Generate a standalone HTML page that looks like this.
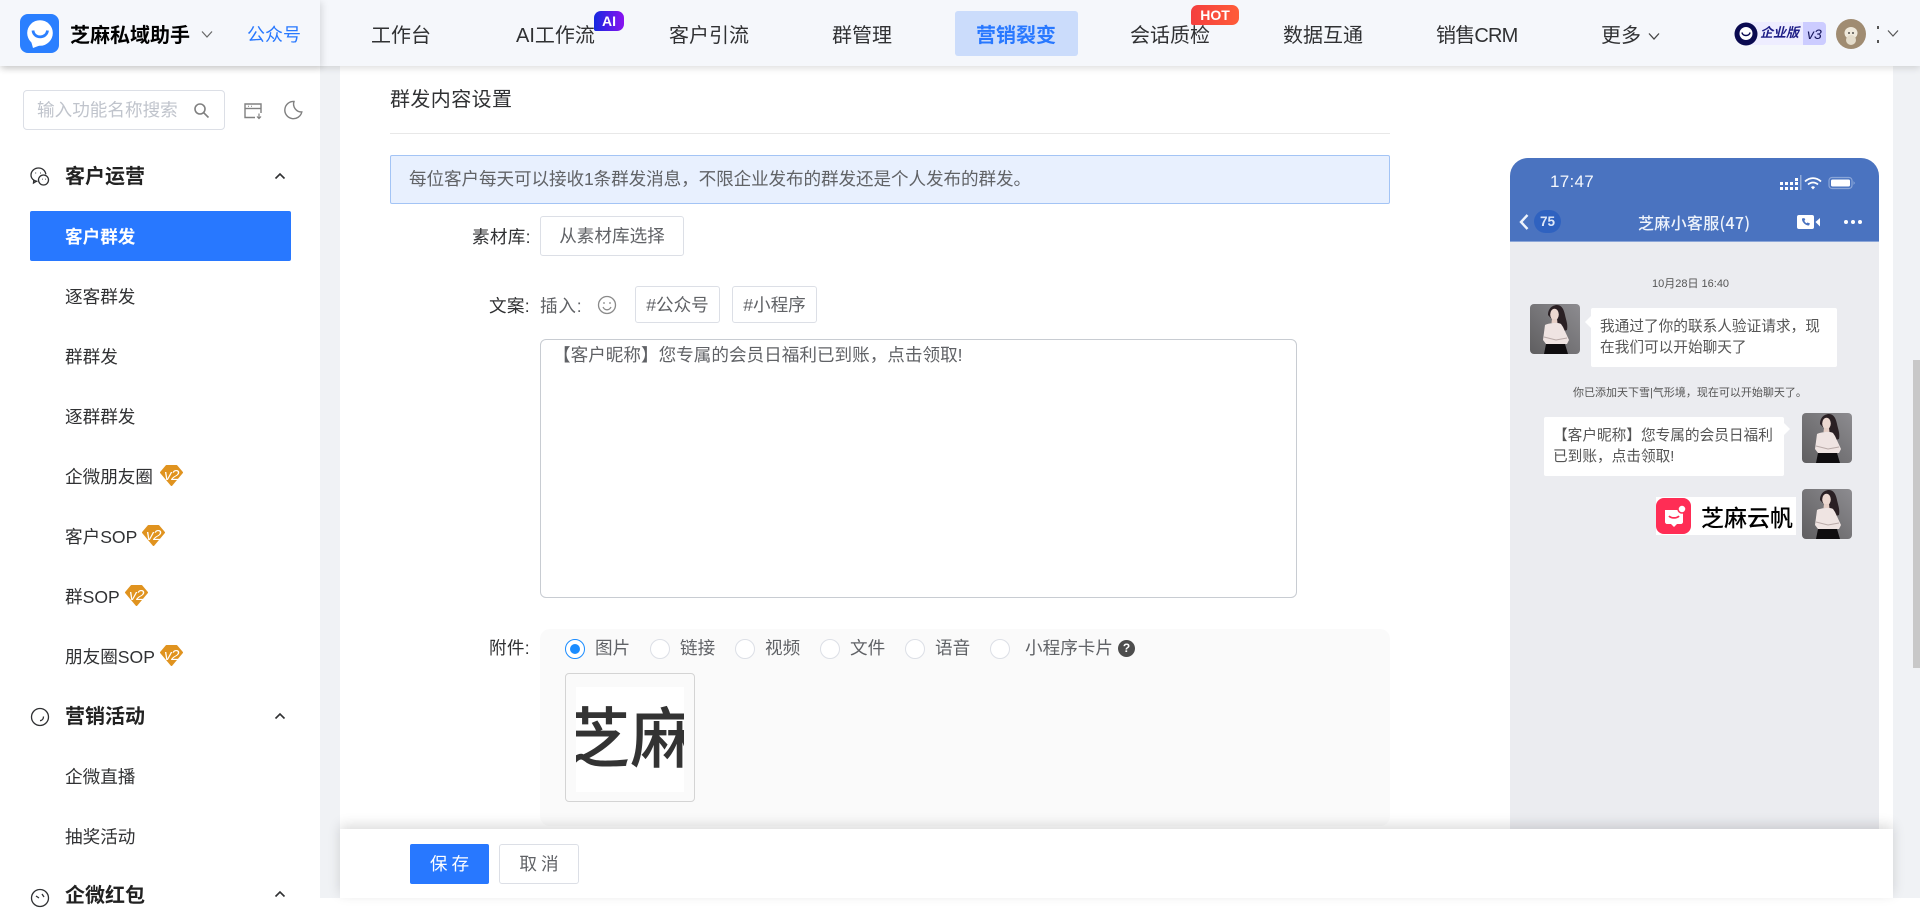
<!DOCTYPE html>
<html lang="zh-CN"><head><meta charset="utf-8"><title>芝麻私域助手</title>
<style>
*{box-sizing:border-box;margin:0;padding:0}
html,body{width:1920px;height:898px;overflow:hidden;background:#fff;font-family:"Liberation Sans","Noto Sans CJK SC",sans-serif;color:#303133}
.a{position:absolute}
.t{position:absolute;white-space:nowrap;line-height:24px;height:24px}
.nav{font-size:20px;color:#303133;top:24px}
.side{font-size:17.6px;left:65px;color:#303133}
.h{font-size:20px;font-weight:700;left:65px;color:#222}
.lab{font-size:17.6px;color:#303133;letter-spacing:.3px}
.g{font-size:17.6px;color:#606266}
.btn{position:absolute;border:1px solid #dcdfe6;border-radius:3px;background:#fff;font-size:17.6px;color:#606266;text-align:center}
.r{position:absolute;top:639px;width:20px;height:20px;border-radius:50%;border:1px solid #dcdfe6;background:#fff}
.b{position:absolute;background:#fff;border-radius:2px;font-size:14.67px;line-height:20.5px;color:#555;white-space:nowrap}
.v2{position:absolute;width:23px;height:21px}
</style></head><body>

<!-- background strips -->
<div class="a" style="left:320px;top:0;width:20px;height:898px;background:#f0f2f5"></div>
<div class="a" style="left:1893px;top:0;width:27px;height:898px;background:#f0f2f5"></div>
<div class="a" style="left:1913px;top:360px;width:7px;height:308px;background:#c8c8c8"></div>

<!-- sidebar -->
<div class="a" style="left:23px;top:90px;width:202px;height:40px;border:1px solid #dcdfe6;border-radius:4px"></div>
<div class="t" style="left:37px;top:98px;font-size:17.6px;color:#c0c4cc">输入功能名称搜索</div>
<svg class="a" style="left:193px;top:102px" width="17" height="17" viewBox="0 0 17 17" fill="none" stroke="#808080" stroke-width="1.6"><circle cx="7" cy="7" r="5"/><path d="M10.8 10.8 15.5 15.5"/></svg>
<svg class="a" style="left:243px;top:102px" width="20" height="18" viewBox="0 0 20 18" fill="none" stroke="#808080" stroke-width="1.4"><path d="M12 15.5H2V2h16v9"/><path d="M2 6.5h16"/><path d="M5 4.2h1M8 4.2h1" stroke-width="1"/><path d="M16 11.5v5M14 14.5l2 2 2-2" stroke-width="1.2"/></svg>
<svg class="a" style="left:283px;top:100px" width="20" height="20" viewBox="0 0 20 20" fill="none" stroke="#808080" stroke-width="1.4"><path d="M11 1.5A8.6 8.6 0 1 0 18.8 12 8 8 0 0 1 11 1.5z"/></svg>

<svg class="a" style="left:30px;top:166px" width="20" height="21" viewBox="0 0 20 21" fill="none" stroke="#303133" stroke-width="1.3"><path d="M7.5 15.5C3.6 15 1 12.300 1 9 1 5 4.500 2 8.500 2s7 2.800 7.300 6.300"/><path d="M3.800 14 3.500 17l2.800-1.700"/><circle cx="13.500" cy="14" r="5"/><path d="M5.500 7h.6M10 7h.6M12 13.200h.5M15 13.200h.5" stroke-width="1.500"/></svg>
<div class="t h" style="top:165px">客户运营</div>
<svg class="a" style="left:274px;top:172px" width="12" height="8" viewBox="0 0 12 8" fill="none" stroke="#303133" stroke-width="1.600"><path d="M1.500 6.500 6 2l4.500 4.500"/></svg>

<div class="a" style="left:30px;top:211px;width:261px;height:50px;background:#2878ff;border-radius:2px"></div>
<div class="t side" style="top:225px;color:#fff;font-weight:700">客户群发</div>
<div class="t side" style="top:285px">逐客群发</div>
<div class="t side" style="top:345px">群群发</div>
<div class="t side" style="top:405px">逐群群发</div>
<div class="t side" style="top:465px">企微朋友圈</div>
<div class="t side" style="top:525px">客户SOP</div>
<div class="t side" style="top:585px">群SOP</div>
<div class="t side" style="top:645px">朋友圈SOP</div>
<div class="v2" style="left:160px;top:465px"><svg width="23" height="21" viewBox="0 0 23 21"><path d="M6.500 1h10L22 7.500 11.500 20 1 7.500z" fill="#e0931f" stroke="#e0931f" stroke-width="2" stroke-linejoin="round"/><text x="11.500" y="15" text-anchor="middle" font-size="15" letter-spacing="-.5" fill="#fff" font-style="italic" font-family="Liberation Sans">v2</text></svg></div>
<div class="v2" style="left:142px;top:525px"><svg width="23" height="21" viewBox="0 0 23 21"><path d="M6.500 1h10L22 7.500 11.500 20 1 7.500z" fill="#e0931f" stroke="#e0931f" stroke-width="2" stroke-linejoin="round"/><text x="11.500" y="15" text-anchor="middle" font-size="15" letter-spacing="-.5" fill="#fff" font-style="italic" font-family="Liberation Sans">v2</text></svg></div>
<div class="v2" style="left:125px;top:585px"><svg width="23" height="21" viewBox="0 0 23 21"><path d="M6.500 1h10L22 7.500 11.500 20 1 7.500z" fill="#e0931f" stroke="#e0931f" stroke-width="2" stroke-linejoin="round"/><text x="11.500" y="15" text-anchor="middle" font-size="15" letter-spacing="-.5" fill="#fff" font-style="italic" font-family="Liberation Sans">v2</text></svg></div>
<div class="v2" style="left:160px;top:645px"><svg width="23" height="21" viewBox="0 0 23 21"><path d="M6.500 1h10L22 7.500 11.500 20 1 7.500z" fill="#e0931f" stroke="#e0931f" stroke-width="2" stroke-linejoin="round"/><text x="11.500" y="15" text-anchor="middle" font-size="15" letter-spacing="-.5" fill="#fff" font-style="italic" font-family="Liberation Sans">v2</text></svg></div>

<svg class="a" style="left:30px;top:707px" width="20" height="20" viewBox="0 0 20 20" fill="none" stroke="#303133" stroke-width="1.300"><circle cx="10" cy="10" r="8.500"/><path d="M13.500 9.500c0 2.500-1.500 4-3.500 4.200"/></svg>
<div class="t h" style="top:705px">营销活动</div>
<svg class="a" style="left:274px;top:712px" width="12" height="8" viewBox="0 0 12 8" fill="none" stroke="#303133" stroke-width="1.600"><path d="M1.500 6.500 6 2l4.500 4.500"/></svg>
<div class="t side" style="top:765px">企微直播</div>
<div class="t side" style="top:825px">抽奖活动</div>
<svg class="a" style="left:30px;top:888px" width="20" height="20" viewBox="0 0 20 20" fill="none" stroke="#303133" stroke-width="1.300"><circle cx="10" cy="10" r="8.500"/><path d="M6 8l3 2M12 6l2 3"/></svg>
<div class="t h" style="top:884px">企微红包</div>
<svg class="a" style="left:274px;top:890px" width="12" height="8" viewBox="0 0 12 8" fill="none" stroke="#303133" stroke-width="1.600"><path d="M1.500 6.500 6 2l4.500 4.500"/></svg>

<!-- content -->
<div class="t" style="left:390px;top:88px;font-size:20px;color:#303133;letter-spacing:.4px">群发内容设置</div>
<div class="a" style="left:390px;top:133px;width:1000px;height:1px;background:#e8e8e8"></div>
<div class="a" style="left:390px;top:155px;width:1000px;height:49px;background:#e8f0fe;border:1px solid #a3c4f5;border-radius:2px"></div>
<div class="t" style="left:409px;top:167px;font-size:17.6px;color:#606266;letter-spacing:-.1px">每位客户每天可以接收1条群发消息，不限企业发布的群发还是个人发布的群发。</div>

<div class="t lab" style="left:472px;top:225px">素材库:</div>
<div class="btn" style="left:540px;top:216px;width:144px;height:40px;line-height:39px">从素材库选择</div>

<div class="t lab" style="left:489px;top:294px">文案:</div>
<div class="t g" style="left:540px;top:294px;letter-spacing:.8px">插入:</div>
<svg class="a" style="left:597px;top:295px" width="20" height="20" viewBox="0 0 20 20" fill="none" stroke="#8a8a8a" stroke-width="1.300"><circle cx="10" cy="10" r="8.500"/><path d="M6 12c1 2 2.500 2.800 4 2.800s3-.8 4-2.800"/><path d="M7 7.300v1.500M13 7.300v1.500" stroke-width="1.600"/></svg>
<div class="btn" style="left:635px;top:286px;width:85px;height:37px;line-height:36px">#公众号</div>
<div class="btn" style="left:732px;top:286px;width:85px;height:37px;line-height:36px">#小程序</div>

<div class="a" style="left:540px;top:339px;width:757px;height:259px;border:1px solid #c8ccd2;border-radius:6px;background:#fff"></div>
<div class="t g" style="left:553px;top:343px">【客户昵称】您专属的会员日福利已到账，点击领取!</div>

<div class="t lab" style="left:489px;top:636px">附件:</div>
<div class="a" style="left:540px;top:629px;width:850px;height:197px;background:#fafafa;border-radius:10px"></div>
<div class="r" style="left:565px;border:1.500px solid #1a8cff"><div class="a" style="left:3.500px;top:3.500px;width:10px;height:10px;border-radius:50%;background:#1a8cff"></div></div>
<div class="t g" style="left:595px;top:636px">图片</div>
<div class="r" style="left:650px"></div><div class="t g" style="left:680px;top:636px">链接</div>
<div class="r" style="left:735px"></div><div class="t g" style="left:765px;top:636px">视频</div>
<div class="r" style="left:820px"></div><div class="t g" style="left:850px;top:636px">文件</div>
<div class="r" style="left:905px"></div><div class="t g" style="left:935px;top:636px">语音</div>
<div class="r" style="left:990px"></div><div class="t g" style="left:1025px;top:636px">小程序卡片</div>
<div class="a" style="left:1118px;top:640px;width:17px;height:17px;border-radius:50%;background:#4d4d4d;color:#fff;font-size:12px;line-height:17px;text-align:center;font-weight:700">?</div>

<div class="a" style="left:565px;top:673px;width:130px;height:129px;border:1px solid #d4d4d4;border-radius:4px;background:#fafafa"></div>
<div class="a" style="left:576px;top:687px;width:108px;height:105px;background:#fff;overflow:hidden">
<div style="position:absolute;left:-12px;top:12px;width:132px;font-size:66px;line-height:70px;color:#333;white-space:nowrap;font-family:'Noto Sans CJK SC',sans-serif;font-weight:500">芝麻</div></div>

<!-- phone -->
<div class="a" style="left:1510px;top:158px;width:369px;height:680px;background:#ebecf0;border-radius:18px 18px 0 0;overflow:hidden">
<div class="a" style="left:0;top:0;width:369px;height:84px;background:#4a73c0;border-bottom:1px solid #8ba6d8"></div>
</div>
<div class="t" style="left:1550px;top:170px;font-size:17px;font-weight:400;color:#f4f7fd;letter-spacing:.3px">17:47</div>
<svg class="a" style="left:1779px;top:173px" width="78" height="18" viewBox="0 0 78 18" fill="#fff"><path d="M1 9h3v3H1zM1 14h3v3H1zM6 9h3v3H6zM6 14h3v3H6zM11 9h3v3h-3zM11 14h3v3h-3zM16 5h3v3h-3zM16 9h3v3h-3zM16 14h3v3h-3z"/><path d="M21 2h1.500v15H21z" opacity=".4"/><path d="M26 8.500c5-4.500 11-4.500 16 0M29 11.500c3-2.700 7-2.700 10 0" fill="none" stroke="#fff" stroke-width="1.800"/><path d="M32 14.200c1.300-1.200 2.700-1.200 4 0L34 16.500z"/><rect x="50" y="4.500" width="23" height="11" rx="3" fill="none" stroke="#8ba6d8" stroke-width="1.200"/><rect x="52" y="6.500" width="19" height="7" rx="1.500"/><path d="M74.500 8v4l1.500-2z" fill="#8ba6d8"/></svg>
<svg class="a" style="left:1518px;top:213px" width="12" height="18" viewBox="0 0 12 18" fill="none" stroke="#eef3fb" stroke-width="2.400"><path d="M9.500 2 3 9l6.500 7"/></svg>
<div class="a" style="left:1534px;top:210px;width:27px;height:23px;border-radius:12px;background:#2f62c0;color:#dfe8f8;font-size:13.500px;font-weight:700;line-height:23px;text-align:center">75</div>
<div class="t" style="left:1638px;top:210px;font-size:16px;font-weight:500;color:#eef3fb;font-family:'Noto Sans CJK SC',sans-serif;letter-spacing:.3px">芝麻小客服(47)</div>
<svg class="a" style="left:1797px;top:213px" width="24" height="18" viewBox="0 0 24 18"><rect x="0" y="2" width="17" height="14" rx="2" fill="#fff"/><path d="M18.500 9 23 5v8.500z" fill="#fff"/><path d="M5 5.500c-.5 3 3 7 7 7l1-2-2.500-1-1 .8c-1-.6-1.800-1.600-2.200-2.500l1-1L7.300 5z" fill="#4a73c0"/></svg>
<svg class="a" style="left:1843px;top:218px" width="20" height="8" viewBox="0 0 20 8" fill="#fff"><circle cx="3" cy="4" r="2"/><circle cx="10" cy="4" r="2"/><circle cx="17" cy="4" r="2"/></svg>

<div class="t" style="left:1652px;top:272px;font-size:11px;color:#555">10月28日 16:40</div>

<svg width="0" height="0" style="position:absolute"><defs><linearGradient id="avg" x1="0" y1="1" x2="1" y2="0"><stop offset="0" stop-color="#5f5e60"/><stop offset="1" stop-color="#8d8c90"/></linearGradient></defs><symbol id="av" viewBox="0 0 50 50"><rect width="50" height="50" rx="4" fill="url(#avg)"/><path d="M18 11c0-7 5-10 9-10 5 0 7 5 8 10 1 5 3 9 2 15l-6 2-5-8z" fill="#2a2024"/><ellipse cx="24.500" cy="10.500" rx="4.300" ry="5.800" fill="#ecd8d0"/><path d="M22 15h5l.5 4h-6z" fill="#e6cfc6"/><path d="M15 21c4-2 13-3 16-1l2 3 6 13-2 4H16l-3-4z" fill="#efe4e2"/><path d="M14 33l12 3 11-2" fill="none" stroke="#b9aaa8" stroke-width="1"/><path d="M16 40h19l3 10H14z" fill="#0f0d0f"/></symbol></svg>

<svg class="a" style="left:1530px;top:304px" width="50" height="50"><use href="#av"/></svg>
<div class="a" style="left:1585px;top:316px;width:0;height:0;border:6px solid transparent;border-right-color:#fff;border-left:0"></div>
<div class="b" style="left:1591px;top:308px;width:246px;height:59px;padding:9px 0 0 9px">我通过了你的联系人验证请求，现<br>在我们可以开始聊天了</div>
<div class="t" style="left:1573px;top:381px;font-size:11px;color:#555">你已添加天下雪|气形境，现在可以开始聊天了。</div>

<div class="b" style="left:1544px;top:417px;width:240px;height:59px;padding:9px 0 0 9px">【客户昵称】您专属的会员日福利<br>已到账，点击领取!</div>
<div class="a" style="left:1784px;top:423px;width:0;height:0;border:6px solid transparent;border-left-color:#fff;border-right:0"></div>
<svg class="a" style="left:1802px;top:413px" width="50" height="50"><use href="#av"/></svg>

<div class="a" style="left:1656px;top:497px;width:140px;height:38px;background:#fff"></div>
<svg class="a" style="left:1656px;top:498px" width="36" height="37" viewBox="0 0 36 37"><rect width="35" height="36" rx="8" fill="#ff2d55"/><path d="M9 12h18v12c0 1-1 2-2 2h-4l-3 3-3-3h-4c-1 0-2-1-2-2z" fill="#fff"/><circle cx="26" cy="11" r="4" fill="#fff" stroke="#ff2d55" stroke-width="1.500"/><path d="M13 18c2 2.500 8 2.500 10 0" fill="none" stroke="#ff2d55" stroke-width="1.800"/></svg>
<div class="t" style="left:1701px;top:504px;font-size:23px;font-weight:500;color:#000;font-family:'Noto Sans CJK SC',sans-serif">芝麻云帆</div>
<svg class="a" style="left:1802px;top:489px" width="50" height="50"><use href="#av"/></svg>

<!-- footer -->
<div class="a" style="left:340px;top:829px;width:1553px;height:69px;background:#fff;box-shadow:0 -4px 12px rgba(0,0,0,.14)"></div>
<div class="a" style="left:410px;top:844px;width:79px;height:40px;background:#2878ff;border-radius:2px;color:#fff;font-size:17.6px;line-height:40px;text-align:center;letter-spacing:4px;text-indent:4px">保存</div>
<div class="btn" style="left:499px;top:844px;width:80px;height:40px;line-height:38px;letter-spacing:4px;text-indent:4px">取消</div>

<!-- header -->
<div class="a" style="left:0;top:0;width:1920px;height:66px;background:#f5f7fb;box-shadow:0 2px 7px rgba(0,0,0,.14)"></div>
<div class="a" style="left:0;top:0;width:320px;height:66px;background:#f5f7fb;box-shadow:2px 2px 7px rgba(0,0,0,.12)"></div>
<svg class="a" style="left:20px;top:14px" width="39" height="39" viewBox="0 0 39 39"><rect width="39" height="39" rx="8" fill="#2a7fff"/><circle cx="20" cy="19" r="12.800" fill="#fff"/><path d="M11 27l2 7 8-3z" fill="#fff"/><path d="M13 16.500c.8 8.500 13.500 8.500 14.500 0" fill="none" stroke="#2a7fff" stroke-width="2.800"/></svg>
<div class="t" style="left:70px;top:24px;font-size:20px;font-weight:700;color:#000">芝麻私域助手</div>
<svg class="a" style="left:201px;top:30px" width="12" height="9" viewBox="0 0 12 9" fill="none" stroke="#666" stroke-width="1.200"><path d="M1 1.500 6 7l5-5.500"/></svg>
<div class="t" style="left:247px;top:23px;font-size:18px;color:#2878ff">公众号</div>

<div class="t nav" style="left:371px">工作台</div>
<div class="t nav" style="left:516px">AI工作流</div>
<div class="a" style="left:594px;top:11px;width:30px;height:20px;border-radius:7px 7px 7px 2px;background:linear-gradient(90deg,#1428e0,#8a12f0);color:#fff;font-size:14px;font-weight:700;line-height:20px;text-align:center">AI</div>
<div class="t nav" style="left:669px">客户引流</div>
<div class="t nav" style="left:832px">群管理</div>
<div class="a" style="left:955px;top:11px;width:123px;height:45px;background:#cbdcfb;border-radius:3px"></div>
<div class="t nav" style="left:976px;color:#2878ff;font-weight:700">营销裂变</div>
<div class="t nav" style="left:1130px">会话质检</div>
<div class="a" style="left:1191px;top:5px;width:48px;height:20px;border-radius:7px 7px 7px 2px;background:linear-gradient(90deg,#f43f3f,#ff5c38);color:#fff;font-size:14px;font-weight:700;line-height:20px;text-align:center">HOT</div>
<div class="t nav" style="left:1283px">数据互通</div>
<div class="t nav" style="left:1436px;letter-spacing:-.8px">销售CRM</div>
<div class="t nav" style="left:1601px">更多</div>
<svg class="a" style="left:1648px;top:32px" width="12" height="9" viewBox="0 0 12 9" fill="none" stroke="#444" stroke-width="1.300"><path d="M1 1.500 6 7l5-5.500"/></svg>

<div class="a" style="left:1745px;top:22px;width:81px;height:23px;background:#eeedff;border-radius:0 4px 4px 0"></div>
<div class="a" style="left:1803px;top:22px;width:23px;height:23px;background:#ccccff;border-radius:0 4px 4px 0"></div>
<svg class="a" style="left:1734px;top:22px" width="24" height="24" viewBox="0 0 24 24"><circle cx="12" cy="12" r="11.500" fill="#0a0a50"/><circle cx="12" cy="11.500" r="6.500" fill="#fff"/><path d="M8 10.500c.5 4 7.500 4 8 0" fill="none" stroke="#0a0a50" stroke-width="1.500"/></svg>
<div class="t" style="left:1760px;top:21px;font-size:13px;font-weight:700;font-style:italic;color:#1d1d86">企业版</div>
<div class="t" style="left:1807px;top:22px;font-size:14px;font-style:italic;color:#14145a">v3</div>
<svg class="a" style="left:1836px;top:19px" width="30" height="30" viewBox="0 0 30 30"><circle cx="15" cy="15" r="15" fill="#a08c72"/><ellipse cx="15" cy="14" rx="6.500" ry="6" fill="#efe9dc"/><ellipse cx="15" cy="21" rx="5" ry="5" fill="#e4dccb"/><circle cx="13" cy="14" r=".9" fill="#222"/><circle cx="17" cy="14" r=".9" fill="#222"/></svg>
<div class="a" style="left:1877px;top:26px;width:2px;height:3px;background:#555"></div>
<div class="a" style="left:1877px;top:40px;width:2px;height:3px;background:#555"></div>
<svg class="a" style="left:1887px;top:29px" width="12" height="9" viewBox="0 0 12 9" fill="none" stroke="#555" stroke-width="1.200"><path d="M1 1.500 6 7l5-5.500"/></svg>
</body></html>
